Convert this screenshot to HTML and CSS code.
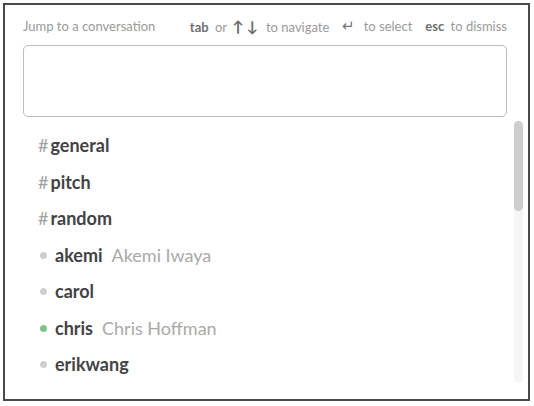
FILE: index.html
```html
<!DOCTYPE html>
<html lang="en">
<head>
  <meta charset="UTF-8" />
  <title>Jump to a conversation</title>
  <link rel="stylesheet" href="styles.css">
</head>
<body>
  <div class="switcher">
    <div class="switcher-head">
      <span class="head-title">Jump to a conversation</span>
      <span class="hints">
        <span class="hint"><b>tab</b> or <span class="arrows">↑↓</span> to navigate</span>
        <span class="hint"><span class="enter">↵</span> to select</span>
        <span class="hint"><b>esc</b> to dismiss</span>
      </span>
    </div>

    <div class="search-box"></div>

    <div class="results">
      <ul class="result-list">
        <li class="item"><span class="hash">#</span><span class="name">general</span></li>
        <li class="item"><span class="hash">#</span><span class="name">pitch</span></li>
        <li class="item"><span class="hash">#</span><span class="name">random</span></li>
        <li class="item"><span class="dot"></span><span class="name">akemi</span><span class="full">Akemi Iwaya</span></li>
        <li class="item"><span class="dot"></span><span class="name">carol</span></li>
        <li class="item"><span class="dot online"></span><span class="name">chris</span><span class="full">Chris Hoffman</span></li>
        <li class="item"><span class="dot"></span><span class="name">erikwang</span></li>
      </ul>
      <div class="scrollbar"><div class="thumb"></div></div>
    </div>
  </div>
</body>
</html>
```

FILE: styles.css
```css
body {
  margin: 0;
  background: #fff;
  font-family: Lato, "Open Sans", sans-serif;
}

.switcher {
  margin: 3px 4px 0 3px;
  height: 394px;
  border: 2px solid #4a4a4a;
  background: #fff;
  display: flex;
  flex-direction: column;
}

.switcher-head {
  display: flex;
  justify-content: space-between;
  align-items: center;
  height: 39px;
  padding: 1px 21px 0 18px;
  font-size: 13px;
  color: #9a9a9a;
}

.hints {
  display: flex;
  align-items: center;
  gap: 13px;
}

.hint b {
  color: #6f6f6f;
  font-weight: 700;
  margin-right: 3px;
}

.arrows {
  color: #666;
  font-weight: 700;
  font-size: 15px;
  letter-spacing: 3px;
  margin: 0 2px;
}

.enter {
  color: #777;
  font-size: 15px;
  margin-right: 5px;
}

.search-box {
  margin: 0 21px 0 18px;
  height: 70px;
  border: 1.5px solid #bdbdbd;
  border-radius: 5px;
}

.results {
  flex: 1;
  display: flex;
  margin-top: 4px;
}

.result-list {
  flex: 1;
  list-style: none;
  margin: 6px 0 0 0;
  padding: 0 0 0 33px;
}

.item {
  height: 36.5px;
  display: flex;
  align-items: center;
  font-size: 18px;
  color: #434246;
}

.hash {
  color: #a0a0a0;
  margin-right: 2px;
}

.name {
  font-weight: 700;
}

.dot {
  width: 7px;
  height: 7px;
  border-radius: 50%;
  background: #cfcfcf;
  margin: 1px 8px 0 2px;
}

.dot.online {
  background: #7ec58a;
}

.full {
  color: #a9a9a9;
  margin-left: 9px;
}

.scrollbar {
  width: 9px;
  margin: 0 5px 16px 0;
  border-radius: 5px;
  background: #f6f6f6;
}

.thumb {
  height: 90px;
  border-radius: 5px;
  background: #cdcdcd;
}
```
